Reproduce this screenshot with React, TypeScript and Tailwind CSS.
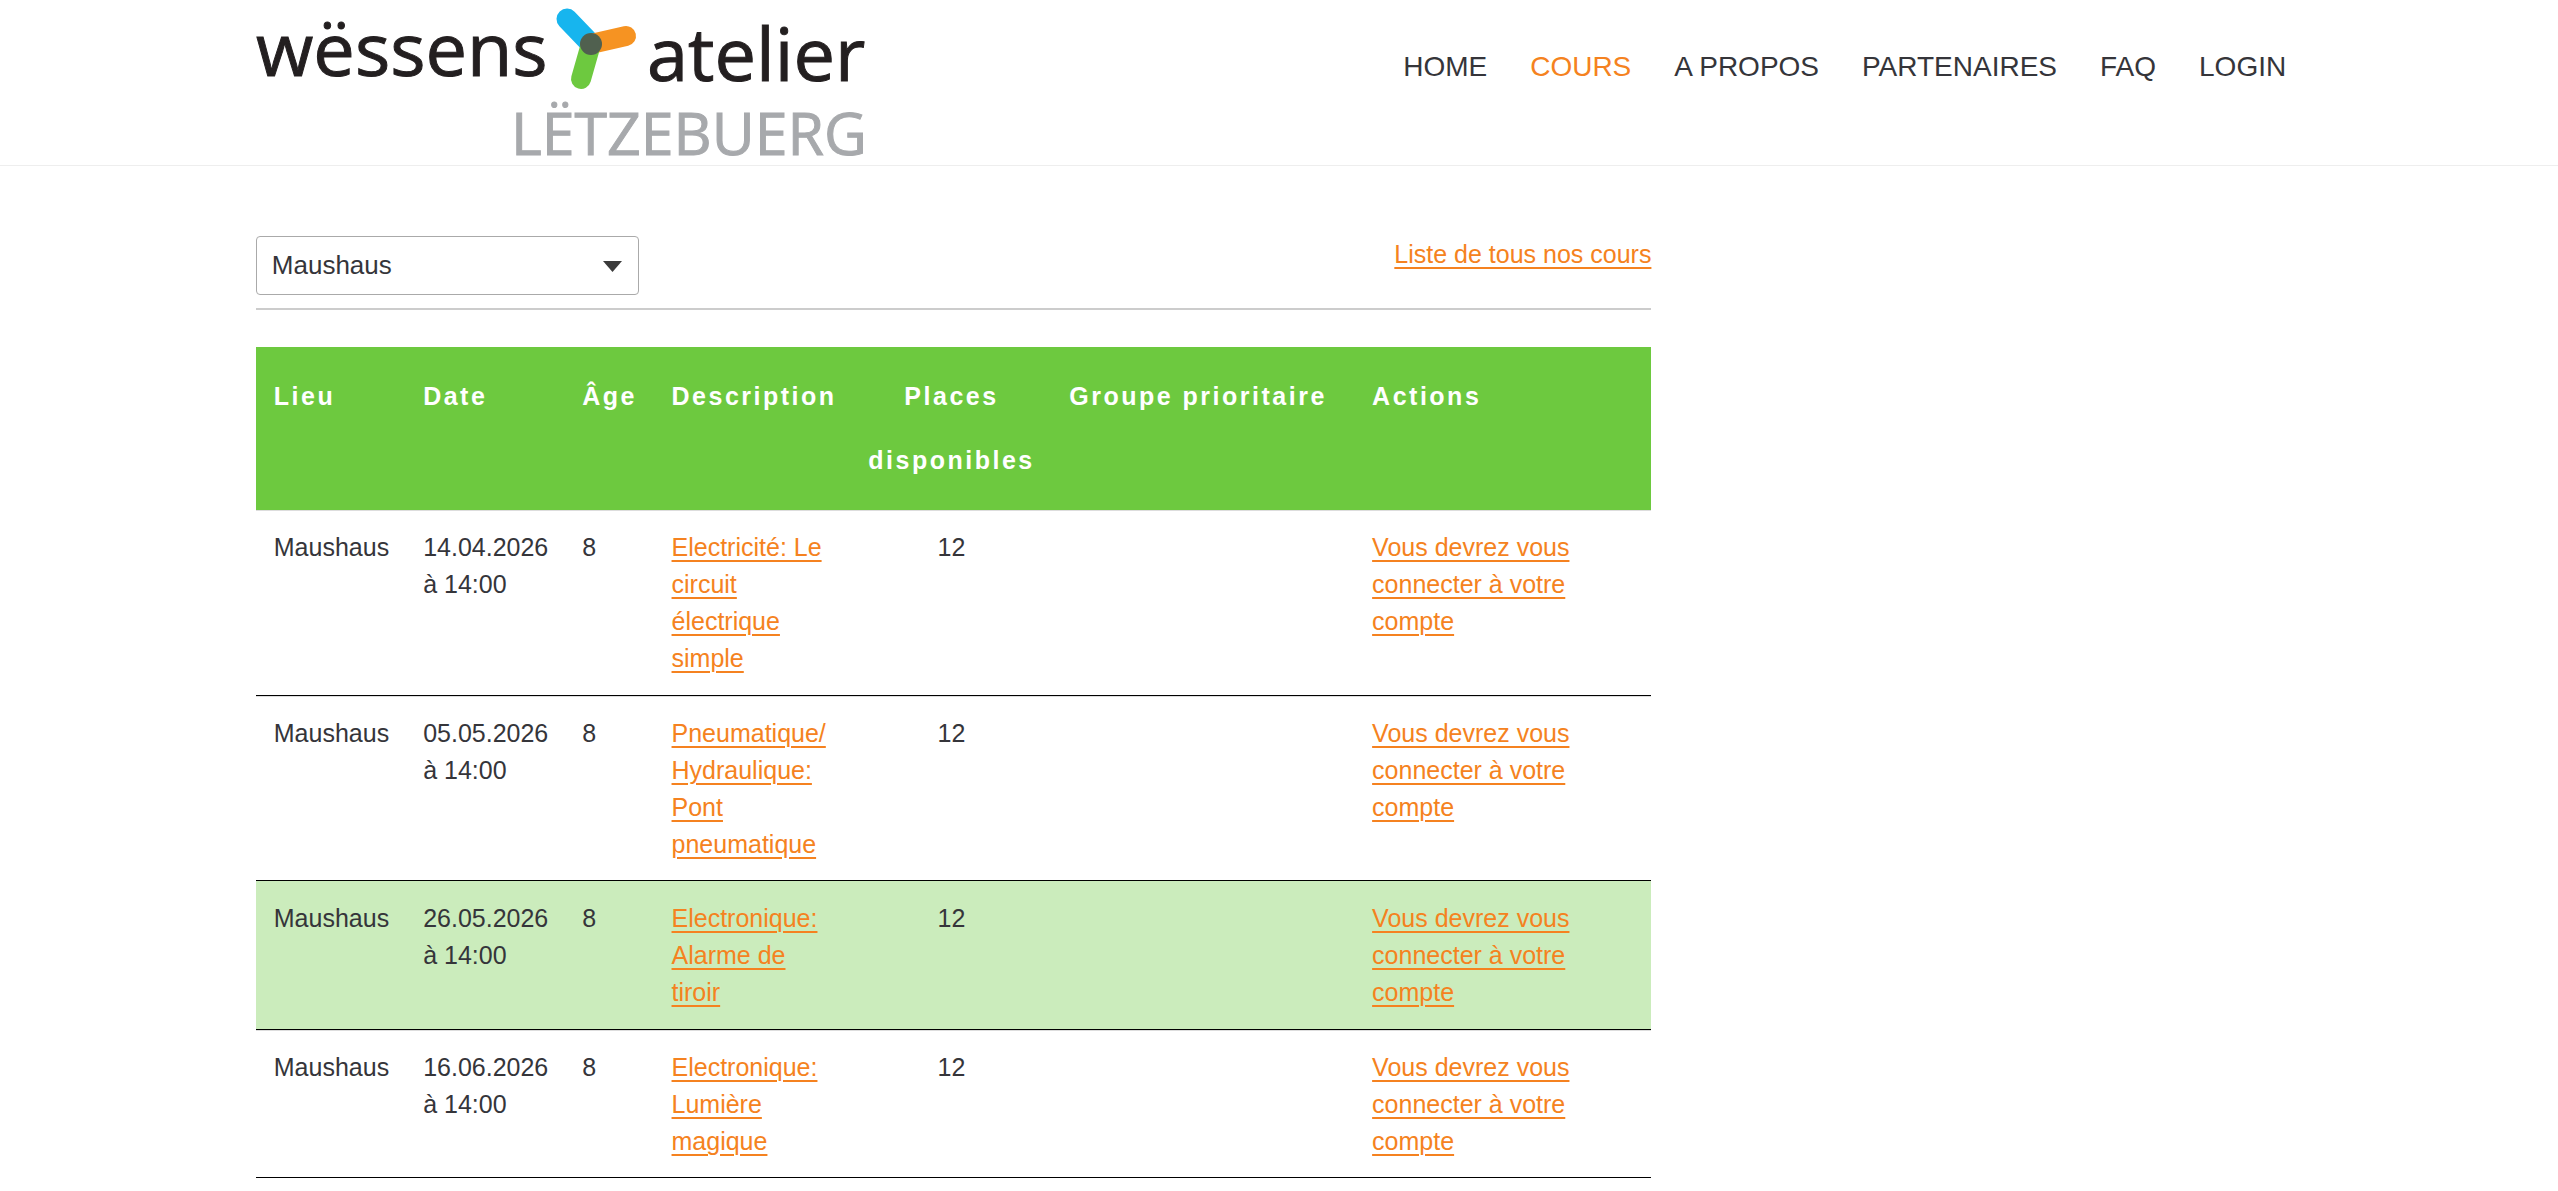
const NAV = ['HOME', 'COURS', 'A PROPOS', 'PARTENAIRES', 'FAQ', 'LOGIN'];

type Course = { place: string; date: string; age: number; title: string; seats: number; highlighted?: boolean };

const COURSES: Course[] = [
  { place: 'Maushaus', date: '14.04.2026 à 14:00', age: 8, title: 'Electricité: Le circuit électrique simple', seats: 12 },
  { place: 'Maushaus', date: '05.05.2026 à 14:00', age: 8, title: 'Pneumatique/ Hydraulique: Pont pneumatique', seats: 12 },
  { place: 'Maushaus', date: '26.05.2026 à 14:00', age: 8, title: 'Electronique: Alarme de tiroir', seats: 12, highlighted: true },
  { place: 'Maushaus', date: '16.06.2026 à 14:00', age: 8, title: 'Electronique: Lumière magique', seats: 12 },
];

const LINK = 'text-[#f58220] underline decoration-2 underline-offset-4';

function Logo() {
  return (
    <svg className="overflow-visible" width="612" height="160" viewBox="0 0 612 160" role="img" aria-label="wëssens atelier Lëtzebuerg" fontFamily="'Open Sans', 'Noto Sans', sans-serif">
      <text x="0" y="76" fontSize="74" fill="#231f20" stroke="#231f20">wëssens</text>
      <text x="391" y="81" fontSize="74" fill="#231f20" stroke="#231f20">atelier</text>
      <text x="255" y="155" fontSize="59" fill="#a7a9ac" stroke="#a7a9ac">LËTZEBUERG</text>
      <g strokeLinecap="round" fill="none">
        <path d="M335 44 311 19" stroke="#17b5ee" strokeWidth="21" />
        <path d="M335 44 370 36" stroke="#f69322" strokeWidth="20" />
        <path d="M335 44 325 79" stroke="#6dc93f" strokeWidth="20" />
      </g>
      <circle cx="335" cy="44" r="11" fill="#50604f" />
    </svg>
  );
}

function CourseRow({ course, first }: { course: Course; first: boolean }) {
  const padding = first ? 'py-[18px]' : course.highlighted ? 'pt-[19px] pb-[18px]' : 'pt-[19px] pb-[17px]';
  const shade = course.highlighted ? 'bg-[#cbecbc]' : first ? '' : 'shadow-[inset_0_1px_0_#dddddd]';
  const cell = `border-b border-black px-[18px] ${padding} ${shade}`;
  return (
    <tr className="align-top">
      <td className={cell}>{course.place}</td>
      <td className={cell}>{course.date}</td>
      <td className={cell}>{course.age}</td>
      <td className={cell}><a href="#cours" className={LINK}>{course.title}</a></td>
      <td className={`${cell} text-center`}>{course.seats}</td>
      <td className={cell}></td>
      <td className={cell}><a href="#login" className={LINK}>Vous devrez vous connecter à votre compte</a></td>
    </tr>
  );
}

export default function App() {
  return (
    <div className="min-h-screen bg-white font-['Liberation_Sans',Arial,sans-serif] text-[25px] leading-[37px] text-[#35353a]">
      <header className="border-b border-[#eeeeee]">
        <div className="mx-auto flex w-4/5 items-start justify-between pb-[5px]">
          <a href="#home"><Logo /></a>
          <nav className="flex gap-[43px] pt-12 pr-4 text-[28px]">
            {NAV.map((label) => (
              <a key={label} href={`#${label.toLowerCase()}`} className={label === 'COURS' ? 'text-[#f58220]' : ''}>
                {label}
              </a>
            ))}
          </nav>
        </div>
      </header>

      <main className="mx-auto w-4/5 pt-[70px]">
        <section className="w-[68.2%]">
          <div className="flex items-start justify-between border-b-2 border-[#cccccc] pb-[13px]">
            <div className="relative">
              <select aria-label="Lieu" defaultValue="Maushaus" className="h-[59px] w-[383px] appearance-none rounded border border-[#aaaaaa] bg-white px-[15px] text-[26px]">
                <option>Maushaus</option>
              </select>
              <svg className="pointer-events-none absolute top-[25px] right-[17px]" width="19" height="11" viewBox="0 0 19 11" aria-hidden="true">
                <path d="M0 0h19l-9.500 11z" fill="#3a3a3a" />
              </svg>
            </div>
            <a href="#liste" className={LINK}>Liste de tous nos cours</a>
          </div>

          <table className="mt-[37px] w-full table-fixed border-separate border-spacing-0">
            <colgroup>
              <col className="w-[10.700%]" />
              <col className="w-[11.400%]" />
              <col className="w-[6.400%]" />
              <col className="w-[14.200%]" />
              <col className="w-[14.300%]" />
              <col className="w-[21.700%]" />
              <col className="w-[21.300%]" />
            </colgroup>
            <thead className="bg-[#6dc93f] text-left align-top leading-[64px] tracking-widest text-white">
              <tr>
                {['Lieu', 'Date', 'Âge', 'Description', 'Places disponibles', 'Groupe prioritaire', 'Actions'].map((h) => (
                  <th
                    key={h}
                    scope="col"
                    className={`border-b border-[#dddddd] pt-[17px] pb-[18px] align-top font-bold ${h === 'Places disponibles' ? 'px-4 text-center' : h === 'Âge' ? 'pl-[18px]' : 'px-[18px]'}`}
                  >
                    {h}
                  </th>
                ))}
              </tr>
            </thead>
            <tbody>
              {COURSES.map((course, i) => (
                <CourseRow key={course.date} course={course} first={i === 0} />
              ))}
            </tbody>
          </table>
        </section>
      </main>
    </div>
  );
}
